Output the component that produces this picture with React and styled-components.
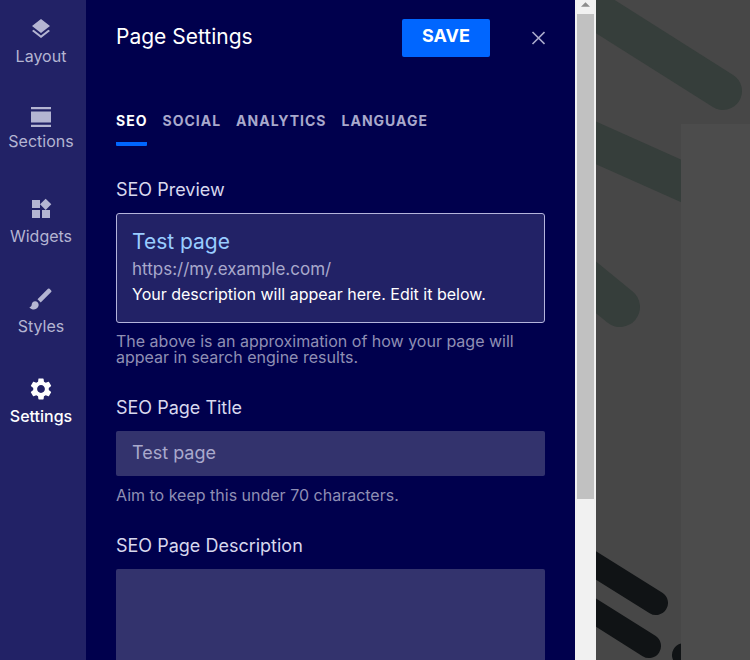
import React from 'react';
import styled, { createGlobalStyle } from 'styled-components';
import { MdBrush, MdLayers, MdSettings, MdWidgets } from 'react-icons/md';

const SectionsIcon = () => (
  <svg width='24' height='24' viewBox='0 0 24 24' fill='currentColor' aria-hidden='true'>
    <path d='M2 2h20v2.2H2zM2 6.5h20v11H2zM2 19.8h20V22H2z' />
  </svg>
);

const navItems = [
  { label: 'Layout', icon: <MdLayers size={24} /> },
  { label: 'Sections', icon: <SectionsIcon />, tight: true },
  { label: 'Widgets', icon: <MdWidgets size={24} /> },
  { label: 'Styles', icon: <MdBrush size={28} /> },
  { label: 'Settings', icon: <MdSettings size={26} />, active: true },
];

const tabs = ['SEO', 'Social', 'Analytics', 'Language'];

const App = () => {
  return (
    <>
      <GlobalStyle />
      <Page>
        <Sidebar>
          {navItems.map(({ label, icon, tight, active }) => (
            <NavButton key={label} type='button' $tight={tight} $active={active}>
              <IconBox>{icon}</IconBox>
              {label}
            </NavButton>
          ))}
        </Sidebar>
        <Panel>
          <Header>
            <h1>Page Settings</h1>
            <SaveButton type='button'>Save</SaveButton>
            <CloseButton type='button' aria-label='Close'>
              <svg width='14' height='14' viewBox='0 0 14 14' fill='none' stroke='currentColor' strokeWidth='1.6'>
                <path d='M1.5 1l12 12M13.5 1l-12 12' />
              </svg>
            </CloseButton>
          </Header>
          <Tabs>
            {tabs.map((tab, index) => (
              <Tab key={tab} href='#' $active={index === 0}>
                {tab}
              </Tab>
            ))}
          </Tabs>
          <Field>
            <Title as='h2'>SEO Preview</Title>
            <Preview>
              <PreviewTitle>Test page</PreviewTitle>
              <PreviewUrl>https://my.example.com/</PreviewUrl>
              <PreviewText>Your description will appear here. Edit it below.</PreviewText>
            </Preview>
            <Help>The above is an approximation of how your page will appear in search engine results.</Help>
          </Field>
          <Field>
            <Title htmlFor='seo-title'>SEO Page Title</Title>
            <Input id='seo-title' type='text' placeholder='Test page' />
            <Help>Aim to keep this under 70 characters.</Help>
          </Field>
          <Field>
            <Title htmlFor='seo-description'>SEO Page Description</Title>
            <TextArea id='seo-description' />
          </Field>
        </Panel>
        <Scrollbar>
          <ScrollArrow viewBox='0 0 10 5' aria-hidden='true'>
            <path d='M0 5L5 0l5 5z' />
          </ScrollArrow>
          <ScrollTrack>
            <ScrollThumb />
          </ScrollTrack>
        </Scrollbar>
        <Canvas>
          <Artwork viewBox='0 0 154 660' preserveAspectRatio='xMinYMin slice' aria-hidden='true'>
            <g stroke='#363e3b' strokeLinecap='round' fill='none'>
              <path d='M-20 -2L127 91' strokeWidth='38' />
              <path d='M-20 134L110 192' strokeWidth='39' />
              <path d='M-20 271L24 307' strokeWidth='40' />
            </g>
            <g stroke='#101315' strokeLinecap='round' fill='none'>
              <path d='M-20 553L60 603' strokeWidth='24' />
              <path d='M-20 600L53 646' strokeWidth='24' />
              <path d='M88 655L110 668' strokeWidth='24' />
            </g>
          </Artwork>
          <Sheet />
        </Canvas>
      </Page>
    </>
  );
};

const GlobalStyle = createGlobalStyle`
  * {
    box-sizing: border-box;
  }
  body {
    margin: 0;
    overflow: hidden;
    font-family: Inter, 'Liberation Sans', sans-serif;
  }
  h1,
  h2,
  p {
    margin: 0;
  }
  button,
  input,
  textarea {
    font-family: inherit;
    border: none;
  }
`;
const Page = styled.div`
  display: flex;
  height: 100vh;
  overflow: hidden;
  background-color: #474747;
`;
const Sidebar = styled.nav`
  flex: 0 0 86px;
  display: flex;
  flex-direction: column;
  background-color: #222266;
`;
const NavButton = styled.button`
  height: 90px;
  display: flex;
  flex-direction: column;
  align-items: center;
  gap: ${({ $tight }) => ($tight ? '1px' : '4px')};
  padding: ${({ $tight }) => ($tight ? '14px' : '16px')} 4px 0 0;
  background: none;
  color: ${({ $active }) => ($active ? '#ffffff' : '#b4b5d2')};
  font-size: 16px;
  font-weight: ${({ $active }) => ($active ? 500 : 400)};
  line-height: 20px;
`;
const IconBox = styled.span`
  height: 26px;
  display: flex;
  align-items: center;
`;
const Panel = styled.main`
  flex: 0 1 489px;
  min-width: 0;
  padding: 0 30px;
  background-color: #00004d;
  color: #dcdcf0;
`;
const Header = styled.header`
  display: flex;
  align-items: center;
  height: 76px;
  h1 {
    flex: 1;
    color: #ffffff;
    font-size: 21px;
    font-weight: 400;
    line-height: 28px;
    padding-bottom: 2px;
  }
`;
const SaveButton = styled.button`
  width: 88px;
  height: 38px;
  padding-bottom: 6px;
  border-radius: 2px;
  background-color: #0066ff;
  color: #ffffff;
  font-size: 18px;
  font-weight: 700;
  text-transform: uppercase;
`;
const CloseButton = styled.button`
  display: flex;
  align-items: center;
  justify-content: flex-end;
  width: 55px;
  height: 38px;
  padding: 0;
  background: none;
  color: #a9a9cc;
`;
const Tabs = styled.nav`
  display: flex;
  gap: 15px;
  margin-top: 35px;
  padding-bottom: 1px;
`;
const Tab = styled.a`
  padding-bottom: 11px;
  border-bottom: 4px solid ${({ $active }) => ($active ? '#0066ff' : 'transparent')};
  border-radius: 1px;
  color: ${({ $active }) => ($active ? '#ffffff' : '#a9a9cc')};
  font-size: 14px;
  font-weight: 700;
  letter-spacing: 1px;
  line-height: 20px;
  text-decoration: none;
  text-transform: uppercase;
`;
const Field = styled.section`
  display: flex;
  flex-direction: column;
  margin-top: 30px;
`;
const Title = styled.label`
  margin-bottom: 10px;
  color: #d8d8ee;
  font-size: 18px;
  font-weight: 400;
  line-height: 26px;
`;
const Preview = styled.div`
  height: 110px;
  margin-bottom: 10px;
  padding: 14px 15px;
  border: 1px solid #b4b4dc;
  border-radius: 3px;
  background-color: #222266;
`;
const PreviewTitle = styled.p`
  color: #99ccff;
  font-size: 21px;
  line-height: 28px;
`;
const PreviewUrl = styled.p`
  color: #a9a9cc;
  font-size: 17px;
  line-height: 26px;
`;
const PreviewText = styled.p`
  color: #ffffff;
  font-size: 16px;
  line-height: 24px;
`;
const Help = styled.p`
  color: #8f8fb4;
  font-size: 16px;
  line-height: 16px;
`;
const Input = styled.input`
  height: 45px;
  margin-bottom: 11px;
  padding: 0 16px 2px;
  border-radius: 2px;
  background-color: #33336d;
  color: #ffffff;
  font-size: 18px;
  &::placeholder {
    color: #a9a9cc;
    opacity: 1;
  }
`;
const TextArea = styled.textarea`
  height: 140px;
  padding: 12px 16px;
  border-radius: 2px;
  background-color: #33336d;
  color: #ffffff;
  font-size: 18px;
  resize: none;
`;
const Scrollbar = styled.div`
  flex: 0 0 21px;
  display: flex;
  flex-direction: column;
  align-items: center;
  padding: 2px 2px 0;
  background-color: #f1f1f1;
`;
const ScrollArrow = styled.svg`
  width: 9px;
  height: 5px;
  margin-bottom: 7px;
  fill: #8c8c8c;
`;
const ScrollTrack = styled.div`
  flex: 1;
  width: 17px;
`;
const ScrollThumb = styled.div`
  height: 75%;
  background-color: #c1c1c1;
`;
const Canvas = styled.div`
  flex: 1;
  display: flex;
  position: relative;
  overflow: hidden;
`;
const Artwork = styled.svg`
  position: absolute;
  top: 0;
  left: 0;
  width: 154px;
  height: 660px;
`;
const Sheet = styled.div`
  flex: 1;
  position: relative;
  margin: 124px 0 0 85px;
  background-color: #4c4c4c;
`;
export default App;
